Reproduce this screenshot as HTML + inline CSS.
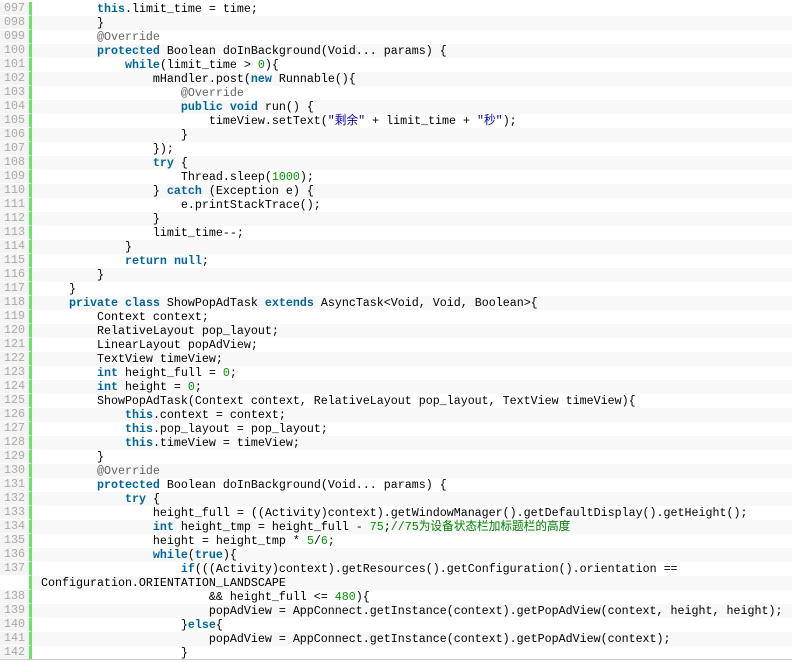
<!DOCTYPE html><html><head><meta charset="utf-8"><style>
body{margin:0;width:792px;height:662px;overflow:hidden;background:#fff;font-family:"Liberation Mono","Noto Sans CJK SC",monospace;font-size:11.67px}
.w{padding-top:2px;border-bottom:1px solid #ccc;height:657px;overflow:hidden}
.r{display:flex;height:14px;line-height:14px}
.r:nth-child(even) .c{background:#f8f8f8}
.n{width:32px;background:#f4f4f4;color:#aaa;padding-left:4px;box-sizing:border-box;border-right:3px solid #6ce26c;border-bottom:1px solid #fff;height:14px;line-height:13px}
.c{flex:1;padding-left:9px;white-space:pre;color:#000}
.k{color:#006699;font-weight:bold}.a{color:#646464}.g{color:#009900}.s{color:#0000aa}.m{color:#008200}
</style></head><body><div class="w">
<div class="r"><div class="n">097</div><div class="c">        <span class="k">this</span>.limit_time = time;</div></div>
<div class="r"><div class="n">098</div><div class="c">        }</div></div>
<div class="r"><div class="n">099</div><div class="c">        <span class="a">@Override</span></div></div>
<div class="r"><div class="n">100</div><div class="c">        <span class="k">protected</span> Boolean doInBackground(Void... params) {</div></div>
<div class="r"><div class="n">101</div><div class="c">            <span class="k">while</span>(limit_time &gt; <span class="g">0</span>){</div></div>
<div class="r"><div class="n">102</div><div class="c">                mHandler.post(<span class="k">new</span> Runnable(){</div></div>
<div class="r"><div class="n">103</div><div class="c">                    <span class="a">@Override</span></div></div>
<div class="r"><div class="n">104</div><div class="c">                    <span class="k">public</span> <span class="k">void</span> run() {</div></div>
<div class="r"><div class="n">105</div><div class="c">                        timeView.setText(<span class="s">"剩余"</span> + limit_time + <span class="s">"秒"</span>);</div></div>
<div class="r"><div class="n">106</div><div class="c">                    }</div></div>
<div class="r"><div class="n">107</div><div class="c">                });</div></div>
<div class="r"><div class="n">108</div><div class="c">                <span class="k">try</span> {</div></div>
<div class="r"><div class="n">109</div><div class="c">                    Thread.sleep(<span class="g">1000</span>);</div></div>
<div class="r"><div class="n">110</div><div class="c">                } <span class="k">catch</span> (Exception e) {</div></div>
<div class="r"><div class="n">111</div><div class="c">                    e.printStackTrace();</div></div>
<div class="r"><div class="n">112</div><div class="c">                }</div></div>
<div class="r"><div class="n">113</div><div class="c">                limit_time--;</div></div>
<div class="r"><div class="n">114</div><div class="c">            }</div></div>
<div class="r"><div class="n">115</div><div class="c">            <span class="k">return</span> <span class="k">null</span>;</div></div>
<div class="r"><div class="n">116</div><div class="c">        }</div></div>
<div class="r"><div class="n">117</div><div class="c">    }</div></div>
<div class="r"><div class="n">118</div><div class="c">    <span class="k">private</span> <span class="k">class</span> ShowPopAdTask <span class="k">extends</span> AsyncTask&lt;Void, Void, Boolean&gt;{</div></div>
<div class="r"><div class="n">119</div><div class="c">        Context context;</div></div>
<div class="r"><div class="n">120</div><div class="c">        RelativeLayout pop_layout;</div></div>
<div class="r"><div class="n">121</div><div class="c">        LinearLayout popAdView;</div></div>
<div class="r"><div class="n">122</div><div class="c">        TextView timeView;</div></div>
<div class="r"><div class="n">123</div><div class="c">        <span class="k">int</span> height_full = <span class="g">0</span>;</div></div>
<div class="r"><div class="n">124</div><div class="c">        <span class="k">int</span> height = <span class="g">0</span>;</div></div>
<div class="r"><div class="n">125</div><div class="c">        ShowPopAdTask(Context context, RelativeLayout pop_layout, TextView timeView){</div></div>
<div class="r"><div class="n">126</div><div class="c">            <span class="k">this</span>.context = context;</div></div>
<div class="r"><div class="n">127</div><div class="c">            <span class="k">this</span>.pop_layout = pop_layout;</div></div>
<div class="r"><div class="n">128</div><div class="c">            <span class="k">this</span>.timeView = timeView;</div></div>
<div class="r"><div class="n">129</div><div class="c">        }</div></div>
<div class="r"><div class="n">130</div><div class="c">        <span class="a">@Override</span></div></div>
<div class="r"><div class="n">131</div><div class="c">        <span class="k">protected</span> Boolean doInBackground(Void... params) {</div></div>
<div class="r"><div class="n">132</div><div class="c">            <span class="k">try</span> {</div></div>
<div class="r"><div class="n">133</div><div class="c">                height_full = ((Activity)context).getWindowManager().getDefaultDisplay().getHeight();</div></div>
<div class="r"><div class="n">134</div><div class="c">                <span class="k">int</span> height_tmp = height_full - <span class="g">75</span>;<span class="m">//75为设备状态栏加标题栏的高度</span></div></div>
<div class="r"><div class="n">135</div><div class="c">                height = height_tmp * <span class="g">5</span>/<span class="g">6</span>;</div></div>
<div class="r"><div class="n">136</div><div class="c">                <span class="k">while</span>(<span class="k">true</span>){</div></div>
<div class="r"><div class="n">137</div><div class="c">                    <span class="k">if</span>(((Activity)context).getResources().getConfiguration().orientation ==</div></div>
<div class="r"><div class="n" style="background:#fff"></div><div class="c">Configuration.ORIENTATION_LANDSCAPE</div></div>
<div class="r"><div class="n">138</div><div class="c">                        &amp;&amp; height_full &lt;= <span class="g">480</span>){</div></div>
<div class="r"><div class="n">139</div><div class="c">                        popAdView = AppConnect.getInstance(context).getPopAdView(context, height, height);</div></div>
<div class="r"><div class="n">140</div><div class="c">                    }<span class="k">else</span>{</div></div>
<div class="r"><div class="n">141</div><div class="c">                        popAdView = AppConnect.getInstance(context).getPopAdView(context);</div></div>
<div class="r"><div class="n">142</div><div class="c">                    }</div></div>
</div></body></html>
